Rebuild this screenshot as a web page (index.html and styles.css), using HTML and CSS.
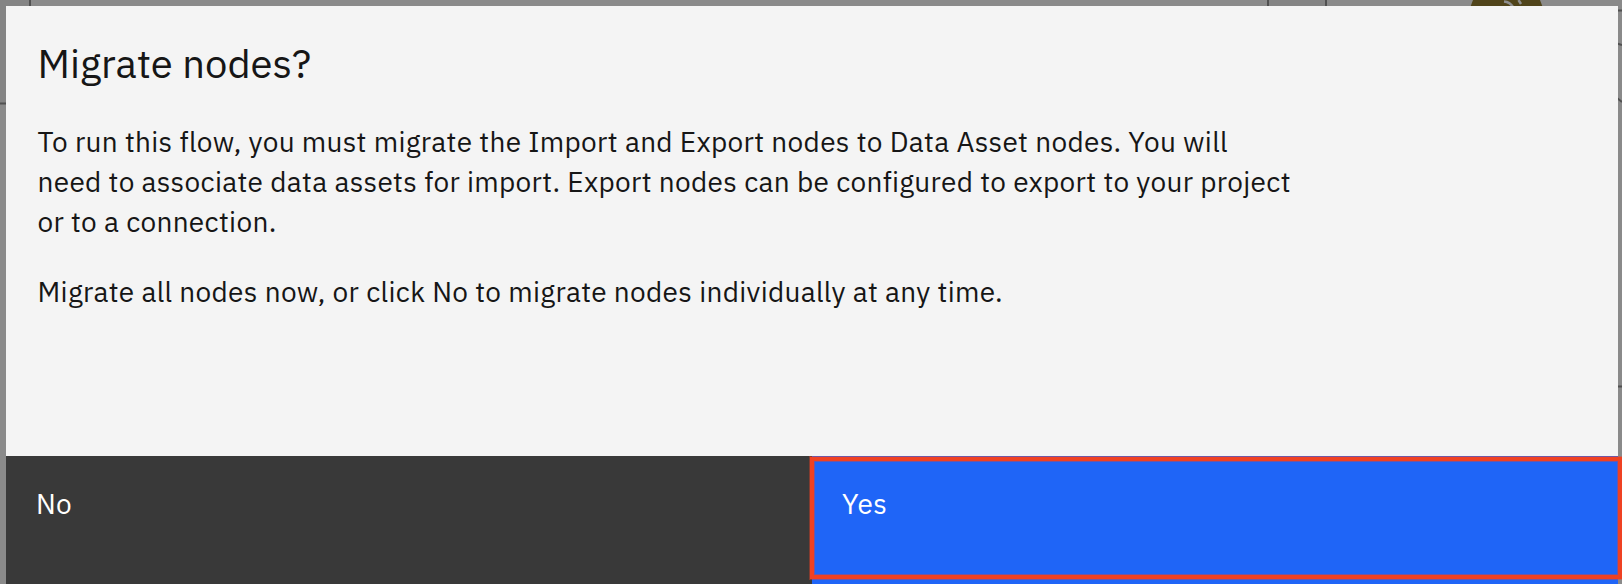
FILE: index.html
```html
<!DOCTYPE html>
<html lang="en">
<head>
<meta charset="utf-8">
<title>Migrate nodes?</title>
<link rel="stylesheet" href="styles.css">
</head>
<body>
<svg class="canvas" viewBox="0 0 1622 584" aria-hidden="true">
  <path class="shade" d="M0 0H29V103H0ZM1269 0H1325V10H1269Z"/>
  <path class="wire" d="M30 0V103.500H0M1268 0V10M1326 0V10"/>
  <path class="wire" d="M1617 10.500H1622M1617 43.500L1622 45M1617 98L1622 102M1617 386.500H1622"/>
  <path class="node" d="M1473 0H1540L1543 8H1470Z"/>
  <path class="glyph" d="M1504 1.500Q1510 2 1513 7M1518.500 0L1521 4"/>
</svg>
<main class="modal">
  <section class="content">
    <h1 class="title">Migrate nodes?</h1>
    <p class="text"><span class="line">To run this flow, you must migrate the Import and Export nodes to Data Asset nodes. You will</span>
    <span class="line">need to associate data assets for import. Export nodes can be configured to export to your project</span>
    <span class="line">or to a connection.</span></p>
    <p class="text"><span class="line">Migrate all nodes now, or click No to migrate nodes individually at any time.</span></p>
  </section>
  <footer class="actions">
    <button class="button secondary">No</button>
    <button class="button primary">Yes</button>
  </footer>
</main>
</body>
</html>
```
FILE: styles.css
```css
*, *::after { box-sizing: border-box; }
body {
  margin: 0;
  width: 1622px;
  height: 584px;
  padding: 6px 4px 0 6px;
  overflow: hidden;
  background: #8a8a8a;
  font-family: "IBM Plex Sans", "Open Sans", sans-serif;
  color: #161616;
}
.canvas { position: absolute; left: 0; top: 0; width: 1622px; height: 584px; }
.shade { fill: #848484; }
.wire { fill: none; stroke: #515151; stroke-width: 2; }
.node { fill: #50441a; }
.glyph { fill: none; stroke: #8e8e8e; stroke-width: 2.5; }
.modal { position: relative; display: flex; flex-direction: column; height: 578px; background: #f4f4f4; }
.content { height: 450px; padding: 32px 31.5px 0; }
.title { margin: 0 0 34px; font-size: 40px; line-height: 50px; font-weight: 400; white-space: nowrap; letter-spacing: 0; }
.text { margin: 0 0 30px; font-size: 28px; line-height: 40px; letter-spacing: 0.32px; }
.line { display: block; width: max-content; white-space: nowrap; }
.actions { display: grid; grid-template-columns: 1fr 1fr; height: 128px; }
.button { position: relative; display: flex; align-items: flex-start; margin: 0; padding: 28px 30px; border: 0; font: 400 28px/40px "IBM Plex Sans", "Open Sans", sans-serif; letter-spacing: 0.32px; color: #fff; text-align: left; }
.secondary { background: #393939; }
.primary { background: #1f65f7; }
.primary::after { content: ""; position: absolute; left: -2px; top: 1px; right: -4px; height: 122px; border: 4px solid #ef4123; box-shadow: 0 0 0 1px rgba(239, 65, 35, 0.4), inset 0 0 0 1px rgba(239, 65, 35, 0.4); }
```
